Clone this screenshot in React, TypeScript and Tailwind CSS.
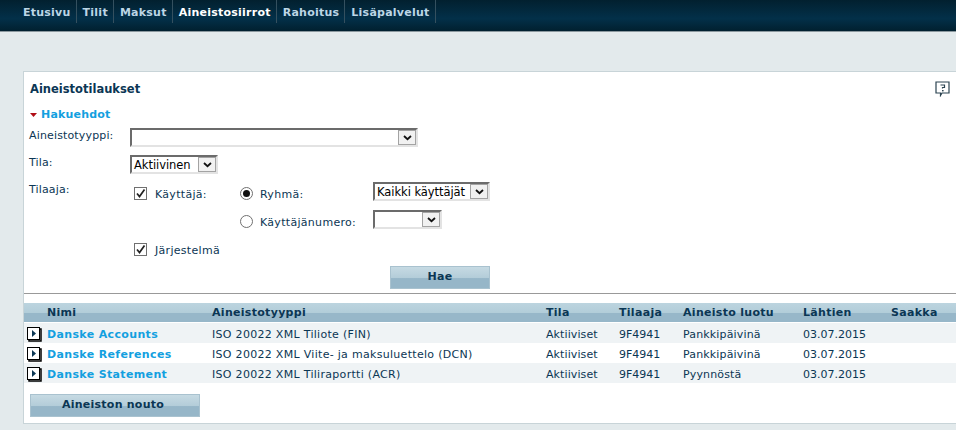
const font = "font-['DejaVu_Sans',Verdana,sans-serif]";

function Chevron() {
  return (
    <svg width="9" height="6" viewBox="0 0 9 6" className="block">
      <path d="M1 1 L4.5 4.2 L8 1" fill="none" stroke="#111" strokeWidth="1.8" />
    </svg>
  );
}

function Select({ text, width, arrow = 18 }: { text?: string; width: string; arrow?: number }) {
  return (
    <div className={`${width} h-[19px] flex bg-white border-2 border-t-[#6b6b6b] border-l-[#6b6b6b] border-r-[#e3e3e3] border-b-[#e3e3e3] box-border`}>
      <div className="flex-1 min-w-0 pl-[2px] pt-[1px] text-[11.5px] tracking-[-0.05px] leading-[15px] text-black whitespace-nowrap">{text}</div>
      <div style={{ width: arrow }} className="h-[15px] shrink-0 bg-[#f1f1f1] border border-[#a3a3a3] flex items-center justify-center">
        <Chevron />
      </div>
    </div>
  );
}

function Check() {
  return (
    <div className="w-[13px] h-[13px] shrink-0 bg-white border border-[#707070] flex items-center justify-center">
      <svg width="11" height="11" viewBox="0 0 11 11" className="block">
        <path d="M2 5.5 L4.5 8.5 L9.5 1.5" fill="none" stroke="#222" strokeWidth="1.7" />
      </svg>
    </div>
  );
}

function Radio({ on }: { on?: boolean }) {
  return (
    <div className="w-[13px] h-[13px] shrink-0 rounded-full bg-white border border-[#707070] flex items-center justify-center">
      {on && <div className="w-[7px] h-[7px] rounded-full bg-[#111]" />}
    </div>
  );
}

function Button({ label, width, inset }: { label: string; width: string; inset?: boolean }) {
  return (
    <div className={`${width} ${inset ? "pr-[4px]" : ""} h-[23px] flex items-center justify-center border border-[#a9c2cf] bg-[linear-gradient(#c6dae3_0%,#b4cdd9_50%,#96b6c8_55%,#96b6c8_100%)] text-[11px] tracking-[0.25px] font-bold text-[#0b3654]`}>
      {label}
    </div>
  );
}

function RowIcon() {
  return (
    <svg width="15" height="15" viewBox="0 0 15 15" className="block">
      <rect x="0.5" y="0.5" width="12" height="12" fill="#fff" stroke="#000" />
      <path d="M12.5 2 H14 V14 H2 V12.5" fill="none" stroke="#000" strokeWidth="1.5" />
      <path d="M5 3 L9 6.5 L5 10 Z" fill="#0b3654" />
    </svg>
  );
}

const cols = "grid grid-cols-[23px_165px_334px_73px_64px_120px_88px_1fr]";
const nav = ["Etusivu", "Tilit", "Maksut", "Aineistosiirrot", "Rahoitus", "Lisäpalvelut"];
const rows = [
  ["Danske Accounts", "ISO 20022 XML Tiliote (FIN)", "Pankkipäivinä"],
  ["Danske References", "ISO 20022 XML Viite- ja maksuluettelo (DCN)", "Pankkipäivinä"],
  ["Danske Statement", "ISO 20022 XML Tiliraportti (ACR)", "Pyynnöstä"],
];

export default function App() {
  return (
    <div className={`${font} w-[956px] h-[430px] overflow-hidden bg-[#e3eaec]`}>
      <div className="h-[31px] bg-[linear-gradient(#02202f,#033049_60%,#01202f)] flex pl-[17px] border-b border-[#8b989e] box-content">
        <div className="h-[23px] flex items-stretch">
          {nav.map((n) => (
            <div
              key={n}
              className={`pl-[6px] pr-[5px] border-r border-[#34505f] text-[11px] leading-[25px] font-bold tracking-[0.24px] ${n === "Aineistosiirrot" ? "text-white" : "text-[#bcd6e6]"}`}
            >
              {n}
            </div>
          ))}
        </div>
      </div>

      <div className="mt-[39px] ml-[23px] h-[353px] bg-white border border-[#c8d4d8] border-r-0 text-[11px] text-[#0b3654] box-border">
        <div className="flex justify-between pl-[6px] pr-[5px] pt-[9px] h-[30px]">
          <div className="text-[11.5px] leading-[17px] font-bold">Aineistotilaukset</div>
          <svg width="16" height="16" viewBox="0 0 16 16" className="block">
            <path d="M1 1 H14 V12 H7 L5.5 14.5 V12 H1 Z" fill="#fff" stroke="#2b4350" strokeWidth="1.2" />
            <path d="M5.5 4 H9.5 V6.5 H7.5 V7.5" fill="none" stroke="#2b4350" strokeWidth="1.2" />
            <rect x="7" y="9" width="1.6" height="1.4" fill="#2b4350" />
          </svg>
        </div>

        <div className="flex items-center pl-[6px] h-[16px] mt-[5px]">
          <svg width="7" height="4" viewBox="0 0 7 4" className="block mr-[4px]"><path d="M0 0 H7 L3.5 4 Z" fill="#b00d16" /></svg>
          <span className="text-[11px] font-bold tracking-[0.2px] text-[#13a0e0]">Hakuehdot</span>
        </div>

        <div className="mt-[5px] flex pl-[5px] h-[19px]">
          <div className="w-[101px] pt-[1px] leading-[14px] tracking-[0.15px]">Aineistotyyppi:</div>
          <Select width="w-[288px]" />
        </div>

        <div className="mt-[8px] flex pl-[5px] h-[19px]">
          <div className="w-[101px] pt-[1px] leading-[14px] tracking-[0.15px]">Tila:</div>
          <Select text="Aktiivinen" width="w-[88px]" />
        </div>

        <div className="mt-[8px] flex pl-[5px]">
          <div className="w-[101px] pt-[1px] leading-[14px] tracking-[0.15px]">Tilaaja:</div>
          <div className="pl-[4px] tracking-[0.3px]">
            <div className="flex">
              <div className="w-[106px] flex items-center gap-[8px] h-[19px] pt-[4px]"><Check /><span className="pt-[4px]">Käyttäjä:</span></div>
              <div className="w-[133px] flex items-center gap-[7px] h-[19px] pt-[4px]"><Radio on /><span className="pt-[4px]">Ryhmä:</span></div>
              <Select text="Kaikki käyttäjät" width="w-[117px]" arrow={18} />
            </div>
            <div className="flex mt-[9px]">
              <div className="w-[106px]" />
              <div className="w-[133px] flex items-center gap-[7px] h-[19px] pt-[4px]"><Radio /><span className="pt-[4px]">Käyttäjänumero:</span></div>
              <Select width="w-[69px]" />
            </div>
            <div className="flex items-center gap-[8px] h-[19px] mt-[9px] pt-[4px]"><Check /><span className="pt-[4px]">Järjestelmä</span></div>
          </div>
        </div>

        <div className="mt-[9px] pl-[366px]"><Button label="Hae" width="w-[100px]" /></div>

        <div className="mt-[4px] h-px bg-[#999]" />

        <div className={`${cols} mt-[9px] h-[19px] pt-[2px] items-center bg-[linear-gradient(#bcd4df_0%,#b2cdd9_50%,#97b7c9_55%,#97b7c9_100%)] font-bold tracking-[0.3px] text-[#0b3654]`}>
          <div />
          <div>Nimi</div>
          <div>Aineistotyyppi</div>
          <div>Tila</div>
          <div>Tilaaja</div>
          <div>Aineisto luotu</div>
          <div>Lähtien</div>
          <div>Saakka</div>
        </div>
        <div className="mt-px">
          {rows.map((r, i) => (
            <div key={r[0]} className={`${cols} h-[20px] pt-[4px] items-center ${i % 2 === 0 ? "bg-[#eff3f5]" : "bg-white"}`}>
              <div className="pl-[3px] -mt-[2px]"><RowIcon /></div>
              <div className="font-bold tracking-[0.35px] text-[#13a0e0]">{r[0]}</div>
              <div className="tracking-[0.3px] whitespace-nowrap">{r[1]}</div>
              <div className="tracking-[0.1px]">Aktiiviset</div>
              <div>9F4941</div>
              <div className="tracking-[0.15px]">{r[2]}</div>
              <div>03.07.2015</div>
              <div />
            </div>
          ))}
        </div>
        <div className="mt-[11px] pl-[6px]"><Button label="Aineiston nouto" width="w-[170px]" inset /></div>
      </div>
    </div>
  );
}
